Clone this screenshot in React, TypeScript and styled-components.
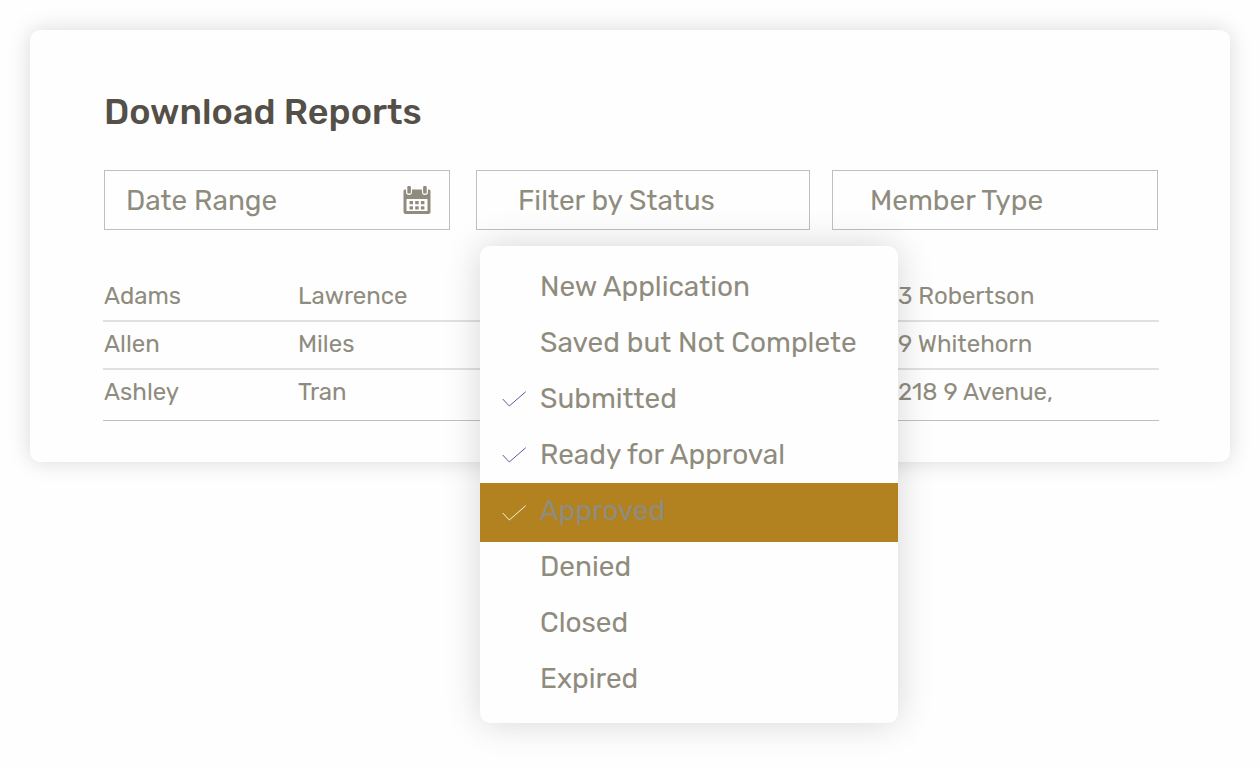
import React, { useState } from "react";
import styled, { createGlobalStyle } from "styled-components";

const ink = "#8f8c7e";

const GlobalStyle = createGlobalStyle`
  *, *::before, *::after { box-sizing: border-box; }
  body {
    margin: 0;
    background: #fefefe;
    color: ${ink};
    font-family: Rubik, Inter, Roboto, sans-serif;
  }
  input, button, select { font: inherit; color: inherit; }
`;

const Page = styled.main`
  min-height: 100vh;
  padding: 30px;
`;

const Card = styled.section`
  padding: 60px 71px 41px 73px;
  border-radius: 10px;
  background: #fefefe;
  box-shadow: 0 0 22px rgba(0, 0, 0, 0.15);
`;

const Title = styled.h1`
  margin: 0 1px 36px;
  color: #555047;
  font-size: 36px;
  font-weight: 500;
  line-height: 44px;
`;

const Filters = styled.div`
  display: grid;
  grid-template-columns: minmax(0, 346fr) minmax(0, 338fr) minmax(0, 326fr);
  gap: 22px;
  margin: 0 1px 44px;
`;

const FieldBox = styled.div`
  display: flex;
  align-items: center;
  height: 60px;
  padding-right: 18px;
  border: 1px solid #c0c0c0;
`;

const DateInput = styled.input`
  flex: 1;
  min-width: 0;
  height: 100%;
  padding: 0 0 0 21px;
  border: 0;
  outline: 0;
  background: none;
  font-size: 28px;

  &::placeholder {
    color: ${ink};
    opacity: 1;
  }
`;

const IconButton = styled.button`
  display: flex;
  padding: 0;
  border: 0;
  background: none;
  cursor: pointer;
`;

const StatusFilter = styled.div`
  position: relative;
  margin-left: 4px;
`;

const StatusButton = styled.button`
  width: 100%;
  height: 60px;
  padding: 0 41px;
  border: 1px solid #c0c0c0;
  background: none;
  font-size: 28px;
  text-align: left;
  cursor: pointer;
`;

const MemberSelect = styled.select`
  width: 100%;
  height: 60px;
  padding: 0 37px;
  border: 1px solid #c0c0c0;
  border-radius: 0;
  background: none;
  font-size: 28px;
  appearance: none;
`;

const Menu = styled.ul`
  position: absolute;
  z-index: 1;
  top: 76px;
  left: 4px;
  width: 418px;
  margin: 0;
  padding: 13px 0 16px;
  border-radius: 10px;
  background: #fefefe;
  box-shadow: 0 0 36px rgba(0, 0, 0, 0.16);
  list-style: none;
`;

const MenuItem = styled.li<{ $active: boolean }>`
  height: ${(p) => (p.$active ? 59 : 56)}px;
  margin-bottom: ${(p) => (p.$active ? -3 : 0)}px;
  background: ${(p) => (p.$active ? "#b28220" : "transparent")};
`;

const OptionLabel = styled.label`
  display: grid;
  grid-template-columns: 24px 1fr;
  column-gap: 14px;
  align-items: center;
  height: 100%;
  padding-left: 22px;
  font-size: 28px;
  line-height: 55px;
  cursor: pointer;
`;

const OptionText = styled.span`
  align-self: start;
  white-space: nowrap;
`;

const TickBox = styled.span`
  display: grid;
  width: 24px;
  height: 16px;

  > * { grid-area: 1 / 1; }
`;

const TickInput = styled.input`
  width: 24px;
  height: 16px;
  margin: 0;
  appearance: none;
`;

const Members = styled.table`
  width: 100%;
  border-collapse: separate;
  border-spacing: 0;
  table-layout: fixed;
  font-size: 24px;
  line-height: 30px;
`;

const Cell = styled.td<{ $last: boolean }>`
  height: ${(p) => (p.$last ? 51 : 48)}px;
  padding: ${(p) => (p.$last ? "7px 0 13px 1px" : "7px 0 9px 1px")};
  border-bottom: ${(p) => (p.$last ? "1px solid #c0c0c0" : "2px solid #e0e0e0")};
  white-space: nowrap;
`;

const CalendarIcon = () => (
  <svg width="28" height="28" viewBox="0 0 28 28" aria-hidden="true">
    <path
      fill={ink}
      fillRule="evenodd"
      d="M2 3.5H3V6a3 3 0 0 0 6 0V3.5H19V6a3 3 0 0 0 6 0V3.5H26a1.5 1.5 0 0 1 1.5 1.5V26a2 2 0 0 1-2 2H2.5a2 2 0 0 1-2-2V5A1.5 1.5 0 0 1 2 3.5ZM3.5 13V25H24.5V13Z"
    />
    <rect x="4.3" width="3.6" height="7.6" rx="1" fill={ink} />
    <rect x="20.1" width="3.6" height="7.6" rx="1" fill={ink} />
    <path
      fill={ink}
      d="M6.5 15H10V18.2H6.5ZM12.2 15H15.7V18.2H12.2ZM17.9 15H21.4V18.2H17.9ZM6.5 20.2H10V23.5H6.5ZM12.2 20.2H15.7V23.5H12.2ZM17.9 20.2H21.4V23.5H17.9Z"
    />
  </svg>
);

const Tick = ({ color }: { color: string }) => (
  <svg width="24" height="16" viewBox="0 0 24 16" aria-hidden="true">
    <path d="M0.7 8L7.3 15L23.7 0.7" fill="none" stroke={color} strokeWidth="0.9" />
  </svg>
);

const statuses = [
  "New Application",
  "Saved but Not Complete",
  "Submitted",
  "Ready for Approval",
  "Approved",
  "Denied",
  "Closed",
  "Expired",
];

const members = [
  ["Adams", "Lawrence", "3 Robertson"],
  ["Allen", "Miles", "9 Whitehorn"],
  ["Ashley", "Tran", "218 9 Avenue,"],
];

export default function App() {
  const [open, setOpen] = useState(true);
  const [chosen, setChosen] = useState(["Submitted", "Ready for Approval", "Approved"]);
  const [active, setActive] = useState("Approved");

  const toggle = (status: string) => {
    setActive(status);
    setChosen((list) =>
      list.includes(status) ? list.filter((s) => s !== status) : [...list, status]
    );
  };

  return (
    <Page>
      <GlobalStyle />
      <Card>
        <Title>Download Reports</Title>
        <Filters>
          <FieldBox>
            <DateInput aria-label="Date Range" placeholder="Date Range" />
            <IconButton type="button" aria-label="Open calendar">
              <CalendarIcon />
            </IconButton>
          </FieldBox>
          <StatusFilter>
            <StatusButton type="button" aria-expanded={open} onClick={() => setOpen(!open)}>
              Filter by Status
            </StatusButton>
            {open && (
              <Menu>
                {statuses.map((status) => (
                  <MenuItem key={status} $active={status === active}>
                    <OptionLabel>
                      <TickBox>
                        <TickInput
                          type="checkbox"
                          checked={chosen.includes(status)}
                          onChange={() => toggle(status)}
                        />
                        {chosen.includes(status) && (
                          <Tick color={status === active ? "#ffffff" : "#4f4489"} />
                        )}
                      </TickBox>
                      <OptionText>{status}</OptionText>
                    </OptionLabel>
                  </MenuItem>
                ))}
              </Menu>
            )}
          </StatusFilter>
          <MemberSelect aria-label="Member Type" defaultValue="">
            <option value="">Member Type</option>
          </MemberSelect>
        </Filters>
        <Members>
          <colgroup>
            <col width="194" />
            <col />
            <col width="262" />
          </colgroup>
          <tbody>
            {members.map((row, i) => (
              <tr key={row[0]}>
                {row.map((text) => (
                  <Cell key={text} $last={i === members.length - 1}>
                    {text}
                  </Cell>
                ))}
              </tr>
            ))}
          </tbody>
        </Members>
      </Card>
    </Page>
  );
}
